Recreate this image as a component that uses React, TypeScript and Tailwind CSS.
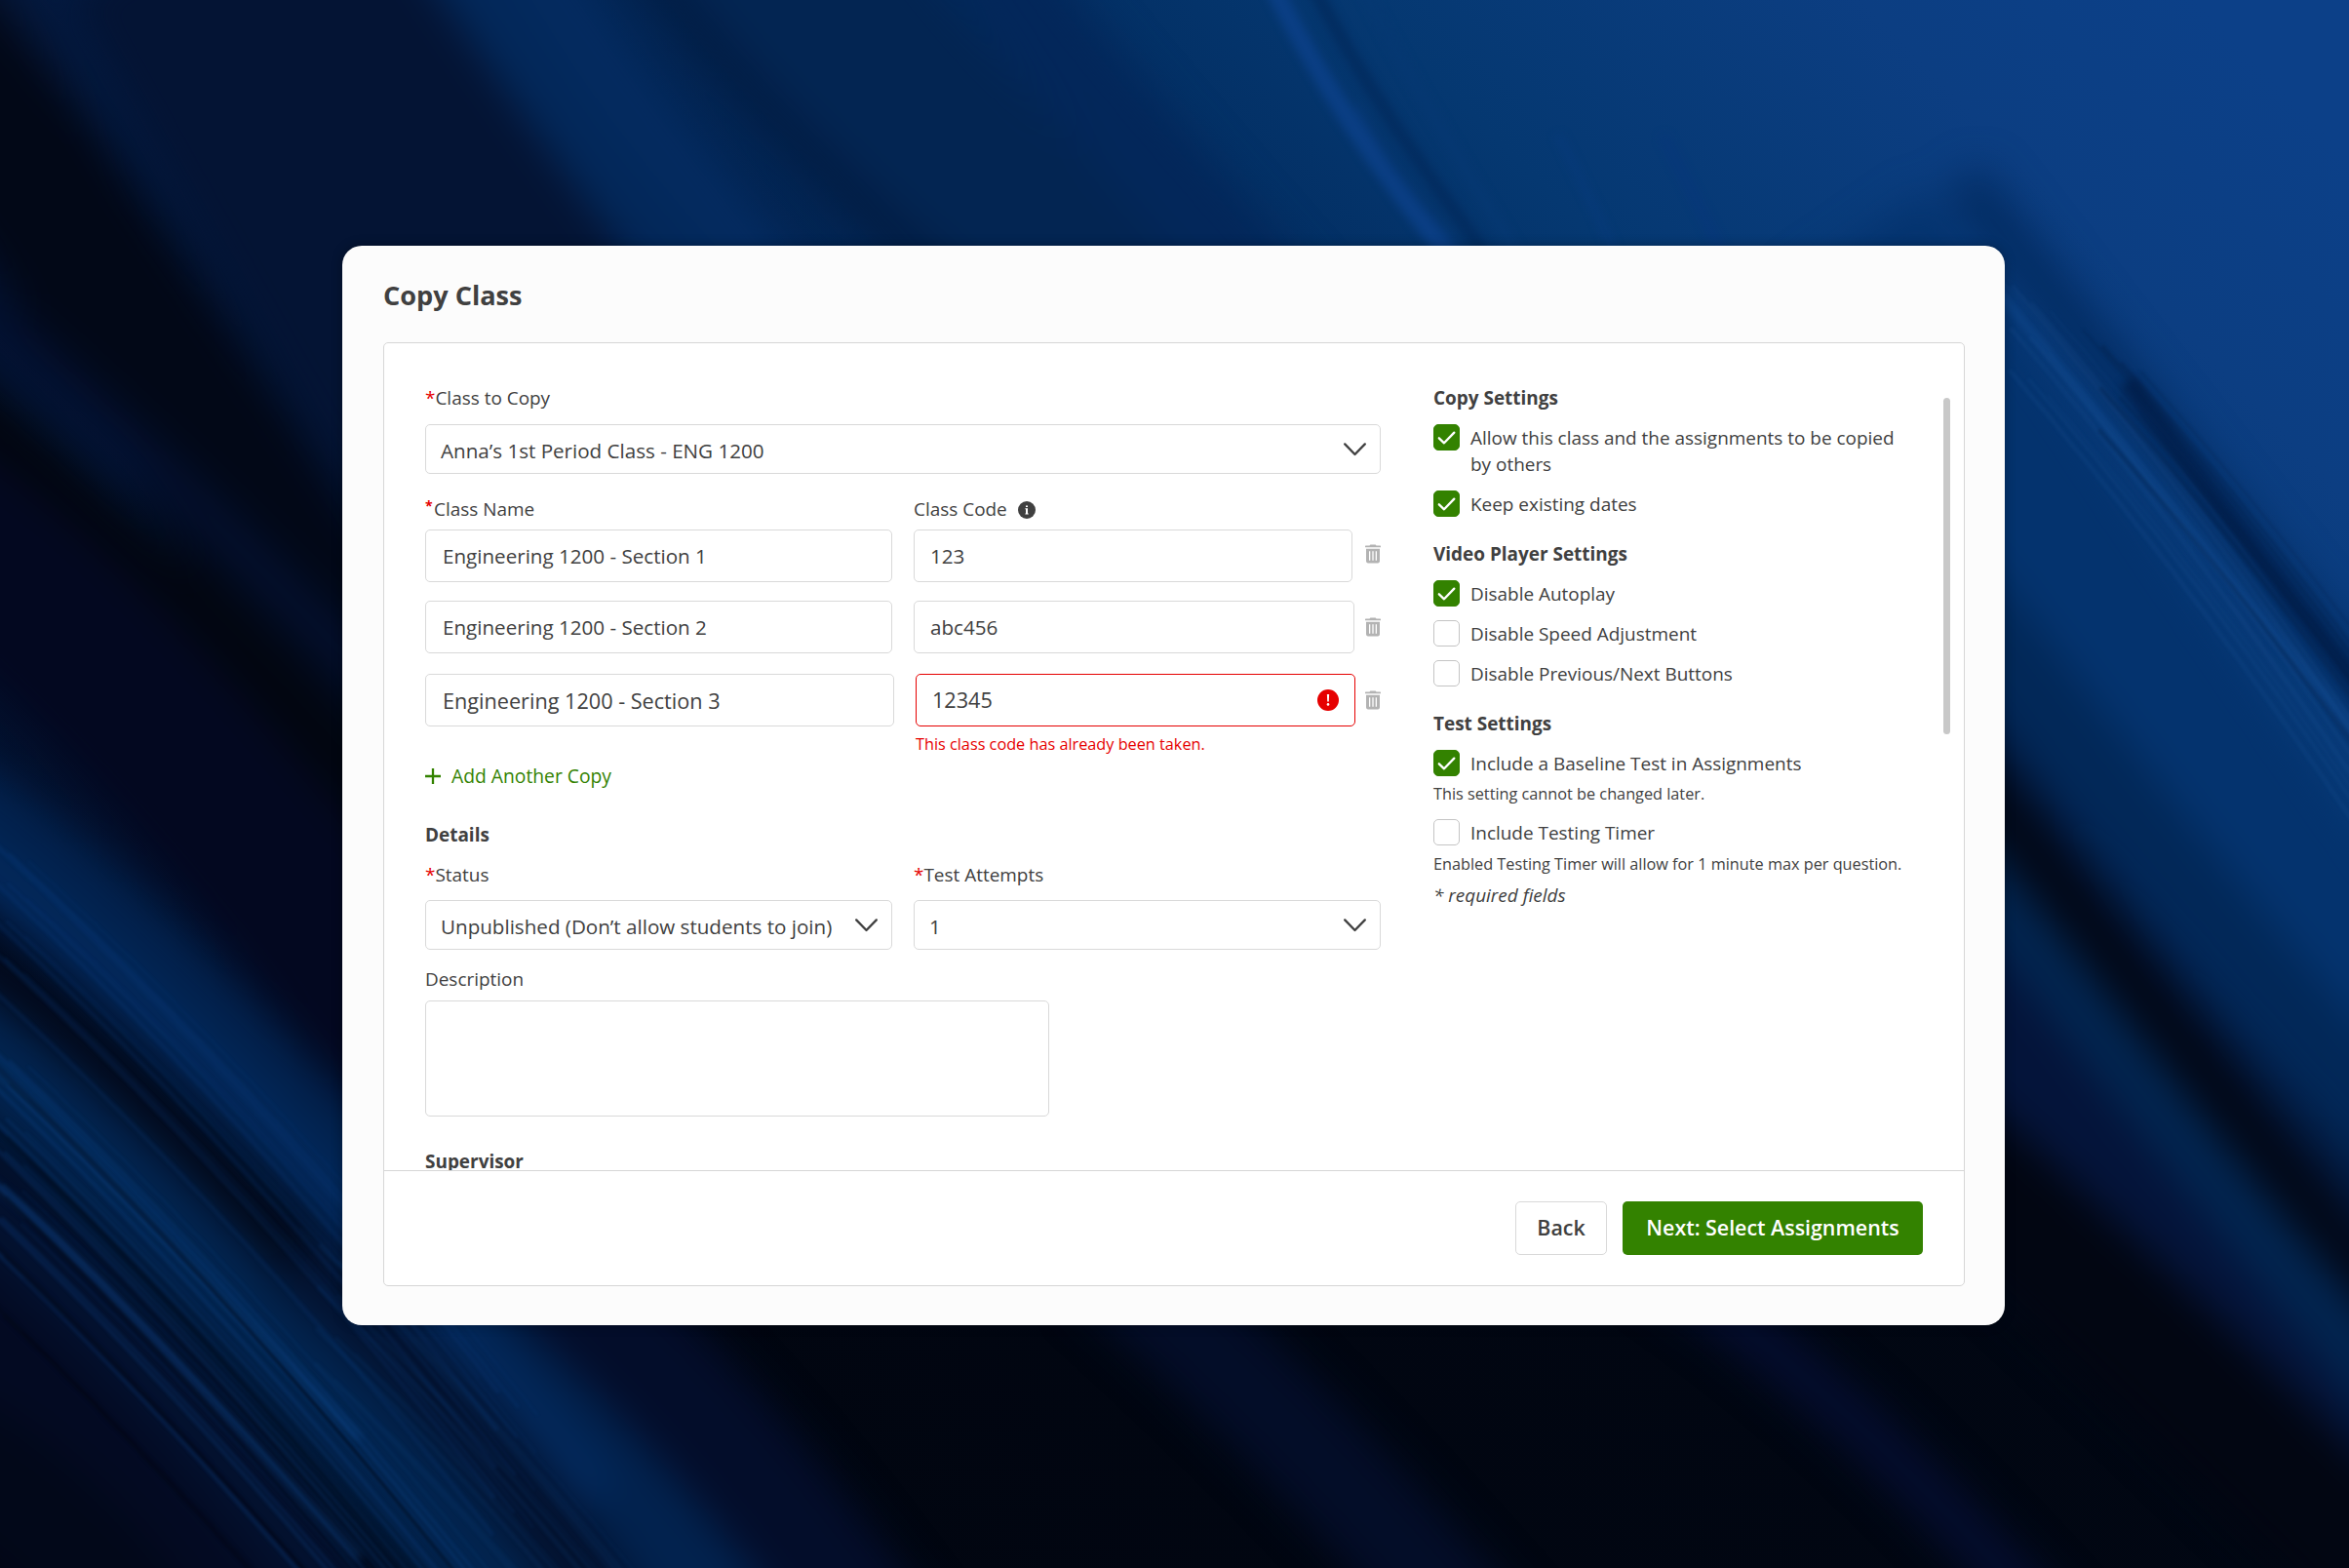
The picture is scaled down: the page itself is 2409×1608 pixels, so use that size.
import { useState } from 'react';
import type { ReactNode } from 'react';
import clsx from 'clsx';

type ClassCopy = {
  name: string;
  code: string;
  error?: string;
};

const copies: ClassCopy[] = [
  { name: 'Engineering 1200 - Section 1', code: '123' },
  { name: 'Engineering 1200 - Section 2', code: 'abc456' },
  { name: 'Engineering 1200 - Section 3', code: '12345', error: 'This class code has already been taken.' },
];

// Wide soft folds of the backdrop, painted in order
const folds = [
  { d: 'M150 -60 C250 120 300 220 420 400', color: '#041434', width: 240 },
  { d: 'M-40 -60 C40 100 110 210 300 480', color: '#061738', width: 50 },
  { d: 'M-60 20 C60 160 160 330 360 640', color: '#020817', width: 110 },
  { d: 'M-40 180 C60 270 150 350 260 470', color: '#03102f', width: 26 },
  { d: 'M-60 250 C40 340 150 430 300 620', color: '#02060f', width: 60 },
  { d: 'M-60 340 C60 420 150 540 300 720', color: '#030820', width: 120 },
  { d: 'M310 -60 C390 60 450 140 600 330', color: '#03285a', width: 90 },
  { d: 'M500 -60 C580 60 640 120 800 300', color: '#032552', width: 150 },
  { d: 'M340 -60 C420 90 490 150 560 230', color: '#042b60', width: 34 },
  { d: 'M405 -60 C490 60 560 130 720 260', color: '#021c42', width: 22 },
  { d: 'M640 -60 C720 60 780 120 900 260', color: '#03275a', width: 60 },
  { d: 'M-60 520 C60 600 210 750 520 1120', color: '#02224e', width: 74 },
  { d: 'M-60 540 C60 630 200 760 400 1000', color: '#032b60', width: 24 },
  { d: 'M-60 600 C60 690 170 800 460 1120', color: '#020818', width: 26 },
  { d: 'M-60 670 C60 750 170 880 400 1140', color: '#02244f', width: 66 },
  { d: 'M-60 770 C40 850 130 950 260 1120', color: '#03112f', width: 70 },
  { d: 'M-60 860 C20 930 90 1000 190 1140', color: '#030a22', width: 90 },
  { d: 'M-60 960 C0 990 60 1040 110 1120', color: '#020819', width: 90 },
  { d: 'M1240 160 C1330 290 1440 460 1640 740', color: '#04336e', width: 110 },
  { d: 'M1240 320 C1340 430 1440 590 1640 800', color: '#022858', width: 60 },
  { d: 'M1310 120 C1420 260 1510 385 1660 560', color: '#032c62', width: 30 },
  { d: 'M1240 400 C1330 530 1440 680 1640 900', color: '#021c45', width: 60 },
  { d: 'M1240 430 C1340 545 1450 700 1640 930', color: '#020817', width: 46 },
  { d: 'M1240 580 C1340 680 1430 800 1640 1020', color: '#04143a', width: 110 },
  { d: 'M1240 490 C1340 600 1450 765 1640 980', color: '#022550', width: 40 },
  { d: 'M1240 720 C1340 810 1430 890 1640 1100', color: '#020612', width: 90 },
  { d: 'M1100 840 C1200 910 1260 960 1420 1140', color: '#040d2e', width: 34 },
  { d: 'M360 840 C460 930 520 1000 620 1140', color: '#030d2a', width: 80 },
  { d: 'M200 840 C290 920 360 1000 450 1140', color: '#03122f', width: 50 },
  { d: 'M740 840 C840 930 910 1000 1030 1140', color: '#030d28', width: 70 },
];

// Narrow highlights and creases
const creases = [
  { d: 'M835 -40 C880 60 930 130 1040 260', color: '#0b4088', width: 12 },
  { d: 'M862 -40 C902 50 955 120 1050 250', color: '#022b5e', width: 9 },
  { d: 'M895 -40 C935 50 985 120 1060 250', color: '#063872', width: 8 },
  { d: 'M905 70 C930 120 960 150 1010 210', color: '#08397a', width: 3 },
  { d: 'M1040 90 C1060 130 1075 160 1100 220', color: '#073a7a', width: 5 },
  { d: 'M1110 90 C1130 130 1150 170 1180 230', color: '#07377a', width: 6 },
  { d: 'M1330 190 C1390 260 1470 370 1600 520', color: '#104a90', width: 4 },
  { d: 'M1420 255 C1460 310 1510 375 1600 490', color: '#021f4c', width: 12 },
  { d: 'M-20 700 C40 750 90 810 240 960', color: '#0c4280', width: 3 },
  { d: 'M-20 780 C40 820 90 880 240 1040', color: '#0c3f7c', width: 3 },
];

// Bundles of thin fibres running side by side
const fibreGroups = [
  { x: -20, y: 550, dx: 340, dy: 370, step: 8, count: 14, color: '#0b4588', opacity: 0.18 },
  { x: -20, y: 690, dx: 380, dy: 430, step: 7, count: 20, color: '#1050a0', opacity: 0.2 },
  { x: -20, y: 694, dx: 380, dy: 430, step: 13, count: 16, color: '#01060f', opacity: 0.22 },
  { x: 200, y: 820, dx: 270, dy: 310, step: 9, count: 12, color: '#0b3a75', opacity: 0.2 },
  { x: 1330, y: 180, dx: 320, dy: 440, step: 9, count: 10, color: '#2463a8', opacity: 0.13 },
  { x: 1390, y: 220, dx: 280, dy: 370, step: 9, count: 8, color: '#01163a', opacity: 0.25 },
];

function Backdrop() {
  return (
    <svg
      className="absolute inset-0 h-full w-full"
      viewBox="0 0 1568 1047"
      preserveAspectRatio="none"
      aria-hidden="true"
    >
      <defs>
        <linearGradient id="base" x1="0" y1="0.75" x2="1" y2="0.1">
          <stop offset="0" stopColor="#020b22" />
          <stop offset="0.35" stopColor="#03193f" />
          <stop offset="0.6" stopColor="#022a5c" />
          <stop offset="0.75" stopColor="#053871" />
          <stop offset="0.9" stopColor="#0c3e82" />
          <stop offset="1" stopColor="#0c4088" />
        </linearGradient>
        <linearGradient id="shade" x1="0" y1="0" x2="0" y2="1">
          <stop offset="0.6" stopColor="#01050f" stopOpacity="0" />
          <stop offset="0.85" stopColor="#01050f" stopOpacity="0.95" />
        </linearGradient>
        <filter
          id="soft"
          filterUnits="userSpaceOnUse"
          x="-100"
          y="-100"
          width="1768"
          height="1247"
          colorInterpolationFilters="sRGB"
        >
          <feGaussianBlur stdDeviation="13" />
        </filter>
        <filter
          id="crease"
          filterUnits="userSpaceOnUse"
          x="-100"
          y="-100"
          width="1768"
          height="1247"
          colorInterpolationFilters="sRGB"
        >
          <feGaussianBlur stdDeviation="3" />
        </filter>
        <filter
          id="fine"
          filterUnits="userSpaceOnUse"
          x="-100"
          y="-100"
          width="1768"
          height="1247"
          colorInterpolationFilters="sRGB"
        >
          <feGaussianBlur stdDeviation="1" />
        </filter>
      </defs>
      <rect width="1568" height="1047" fill="url(#base)" />
      <rect width="1568" height="1047" fill="url(#shade)" />
      <g filter="url(#soft)" fill="none">
        {folds.map((fold) => (
          <path key={fold.d} d={fold.d} stroke={fold.color} strokeWidth={fold.width} />
        ))}
      </g>
      <g filter="url(#crease)" fill="none" opacity="0.85">
        {creases.map((crease) => (
          <path key={crease.d} d={crease.d} stroke={crease.color} strokeWidth={crease.width} />
        ))}
      </g>
      <g filter="url(#fine)" fill="none">
        {fibreGroups.map((group, g) =>
          Array.from({ length: group.count }, (_, i) => {
            const y = group.y + i * group.step + ((i * 37) % 5);
            const x = group.x + ((i * 53) % 40);
            return (
              <path
                key={`${g}-${i}`}
                d={`M${x} ${y} q${group.dx * 0.5} ${group.dy * 0.42} ${group.dx} ${group.dy}`}
                stroke={group.color}
                strokeOpacity={group.opacity}
                strokeWidth={1 + ((i * 29) % 3)}
              />
            );
          }),
        )}
      </g>
    </svg>
  );
}

function ChevronDown() {
  return (
    <svg className="h-[14px] w-[23px] shrink-0" viewBox="0 0 23 14" fill="none" stroke="#404040" strokeWidth="2.3">
      <path d="M1.2 1.4 11.5 12 21.8 1.4" strokeLinecap="round" strokeLinejoin="round" />
    </svg>
  );
}

function TrashIcon() {
  return (
    <svg className="h-[20px] w-[16px]" viewBox="0 0 16 20" fill="#b3b3b3">
      <path d="M5.4 0.4h5.2l0.9 1H15.4a.6.6 0 0 1 .6.6v1.3H0V2a.6.6 0 0 1 .6-.6H4.5z" />
      <path
        fillRule="evenodd"
        d="M1 4.7h14v12.9a1.8 1.8 0 0 1-1.8 1.8H2.8A1.8 1.8 0 0 1 1 17.6zM4 7.2v9.6h1.3V7.2zM7.35 7.2v9.6h1.3V7.2zM10.7 7.2v9.6H12V7.2z"
      />
    </svg>
  );
}

function InfoIcon() {
  return (
    <svg className="h-[18px] w-[18px]" viewBox="0 0 18 18">
      <circle cx="9" cy="9" r="9" fill="#404040" />
      <path d="M8 4.4h2v1.6H8zM7.4 7.2H10v5.2h.7v1H7.4v-1H8V8.2h-.6z" fill="#fff" />
    </svg>
  );
}

function ErrorIcon() {
  return (
    <svg className="h-[22px] w-[22px]" viewBox="0 0 22 22">
      <circle cx="11" cy="11" r="11" fill="#e60000" />
      <path d="M9.9 5h2.2l-.3 7.6h-1.6z" fill="#fff" />
      <circle cx="11" cy="15.4" r="1.3" fill="#fff" />
    </svg>
  );
}

function Label({ required, children }: { required?: boolean; children: ReactNode }) {
  return (
    <div className="h-[27px] text-[18.95px] leading-[27px]">
      {required && <span className="text-[#e60000]">*</span>}
      {children}
    </div>
  );
}

function Heading({ children }: { children: ReactNode }) {
  return <h2 className="h-[27px] text-[18.95px] leading-[27px] font-bold">{children}</h2>;
}

function SelectField({ value, className }: { value: string; className?: string }) {
  return (
    <button
      className={clsx(
        'flex h-[51px] items-center justify-between rounded-[5px] border border-[#d9d9d9] bg-white pr-[14px] pl-[15px] text-[20.6px]',
        className,
      )}
    >
      <span className="pt-[3px] whitespace-nowrap">{value}</span>
      <ChevronDown />
    </button>
  );
}

function Checkbox({ label, defaultChecked = false }: { label: string; defaultChecked?: boolean }) {
  const [checked, setChecked] = useState(defaultChecked);

  return (
    <button className="flex items-start gap-[11px] text-left" onClick={() => setChecked(!checked)}>
      <span
        className={clsx(
          'h-[27px] w-[27px] shrink-0 rounded-[5px] border',
          checked ? 'border-[#338200] bg-[#338200]' : 'border-[#c4c4c4] bg-white',
        )}
      >
        {checked && (
          <svg viewBox="0 0 25 25" fill="none" stroke="#fff" strokeWidth="2.3">
            <path d="M4.8 13.3 10 18.3 20.3 7.6" strokeLinecap="round" strokeLinejoin="round" />
          </svg>
        )}
      </span>
      <span className="pt-px text-[18.95px] leading-[27.3px]">{label}</span>
    </button>
  );
}

export default function App() {
  return (
    <div className="relative h-[1608px] w-[2409px] overflow-hidden bg-[#020b22] pt-[252px] pl-[351px] font-['Open_Sans',sans-serif] text-[#404040]">
      <Backdrop />
      <div className="relative flex h-[1107px] w-[1705px] flex-col rounded-[20px] bg-[#fcfcfc] pr-[41px] pb-[40px] pl-[42px] shadow-[0_0_12px_rgba(0,0,0,0.3)]">
        <h1 className="pt-[32px] text-[27.1px] leading-[37px] font-bold">Copy Class</h1>

        <div className="mt-[30px] flex flex-1 flex-col rounded-[5px] border border-[#d6d6d6] bg-white">
          <div className="flex h-[848px] overflow-hidden pt-[43px] pl-[42px]">
            <div className="w-[980px] shrink-0">
              <Label required>Class to Copy</Label>
              <SelectField className="mt-[13px] w-full" value="Anna’s 1st Period Class - ENG 1200" />

              <div className="mt-[23px] flex h-[27px] text-[18.95px] leading-[27px]">
                <div className="flex w-[501px]">
                  <span className="-mt-[4px] w-[9px] text-[14px] font-bold text-[#e60000]">*</span>
                  Class Name
                </div>
                <div className="flex items-center gap-[11px]">
                  Class Code
                  <InfoIcon />
                </div>
              </div>

              <div className="mt-[7px]">
                {copies.map((copy, i) => (
                  <div
                    key={copy.name}
                    className={clsx('flex items-start', i === 1 && 'mt-[19px]', i === 2 && 'mt-[21px]')}
                  >
                    <input
                      className={clsx(
                        'h-[54px] rounded-[5px] border border-[#d9d9d9] pl-[17px]',
                        copy.error ? 'w-[481px] text-[21.65px]' : 'w-[479px] text-[20.6px]',
                      )}
                      defaultValue={copy.name}
                    />
                    <div className={clsx('ml-[22px] h-[54px]', i === 0 ? 'w-[450px]' : i === 1 ? 'w-[452px]' : 'w-[451px]')}>
                      <div
                        className={clsx(
                          'flex h-[54px] items-center rounded-[5px] border pr-[16px] pl-[16px]',
                          copy.error ? 'border-[#e60000]' : 'border-[#d9d9d9]',
                        )}
                      >
                        <input
                          className={clsx('min-w-0 flex-1', copy.error ? 'pt-px text-[21.65px]' : 'text-[20.6px]')}
                          defaultValue={copy.code}
                        />
                        {copy.error && <ErrorIcon />}
                      </div>
                      {copy.error && (
                        <p className="mt-[6px] text-[16.25px] leading-[24px] text-[#e60000]">{copy.error}</p>
                      )}
                    </div>
                    <button className={clsx('ml-auto', i === 0 ? 'mt-[15px]' : 'mt-[17px]')}>
                      <TrashIcon />
                    </button>
                  </div>
                ))}
              </div>

              <button className="mt-[37px] flex h-[28px] items-center gap-[11px] text-[19.3px] font-medium text-[#338200]">
                <svg className="h-[16px] w-[16px]" viewBox="0 0 16 16" stroke="currentColor" strokeWidth="2.3">
                  <path d="M8 0v16M0 8h16" />
                </svg>
                Add Another Copy
              </button>

              <div className="mt-[33px]">
                <Heading>Details</Heading>
              </div>
              <div className="mt-[14px] flex gap-[22px]">
                <div>
                  <Label required>Status</Label>
                  <SelectField className="mt-[12px] w-[479px]" value="Unpublished (Don’t allow students to join)" />
                </div>
                <div className="flex-1">
                  <Label required>Test Attempts</Label>
                  <SelectField className="mt-[12px] w-full" value="1" />
                </div>
              </div>

              <div className="mt-[17px]">
                <Label>Description</Label>
                <textarea className="mt-[8px] block h-[119px] w-[640px] resize-none rounded-[5px] border border-[#d9d9d9]" />
              </div>
              <div className="mt-[33px]">
                <Heading>Supervisor</Heading>
              </div>
            </div>

            <div className="ml-[54px] w-[490px] shrink-0">
              <Heading>Copy Settings</Heading>
              <div className="mt-[13px] flex flex-col gap-[12px]">
                <Checkbox label="Allow this class and the assignments to be copied by others" defaultChecked />
                <Checkbox label="Keep existing dates" defaultChecked />
              </div>
              <div className="mt-[24px]">
                <Heading>Video Player Settings</Heading>
              </div>
              <div className="mt-[13px] flex flex-col gap-[12.7px]">
                <Checkbox label="Disable Autoplay" defaultChecked />
                <Checkbox label="Disable Speed Adjustment" />
                <Checkbox label="Disable Previous/Next Buttons" />
              </div>
              <div className="mt-[24px]">
                <Heading>Test Settings</Heading>
              </div>
              <div className="mt-[13px]">
                <Checkbox label="Include a Baseline Test in Assignments" defaultChecked />
                <p className="mt-[6px] text-[16.25px] leading-[23px]">This setting cannot be changed later.</p>
              </div>
              <div className="mt-[14px]">
                <Checkbox label="Include Testing Timer" />
                <p className="mt-[6px] text-[16.25px] leading-[23px]">
                  Enabled Testing Timer will allow for 1 minute max per question.
                </p>
              </div>
              <p className="mt-[7px] text-[18.95px] leading-[27px] italic">* required fields</p>
            </div>

            <div className="mt-[13px] ml-[33px] h-[345px] w-[7px] rounded-full bg-[#c8c8c8]" />
          </div>

          <div className="flex flex-1 items-center justify-end gap-[16px] border-t border-[#d6d6d6] pr-[42px]">
            <button className="h-[55px] w-[94px] rounded-[5px] border border-[#d9d9d9] bg-white text-[21.4px] font-semibold">
              Back
            </button>
            <button className="h-[55px] w-[308px] rounded-[5px] bg-[#338200] text-[21.4px] font-semibold text-white">
              Next: Select Assignments
            </button>
          </div>
        </div>
      </div>
    </div>
  );
}
